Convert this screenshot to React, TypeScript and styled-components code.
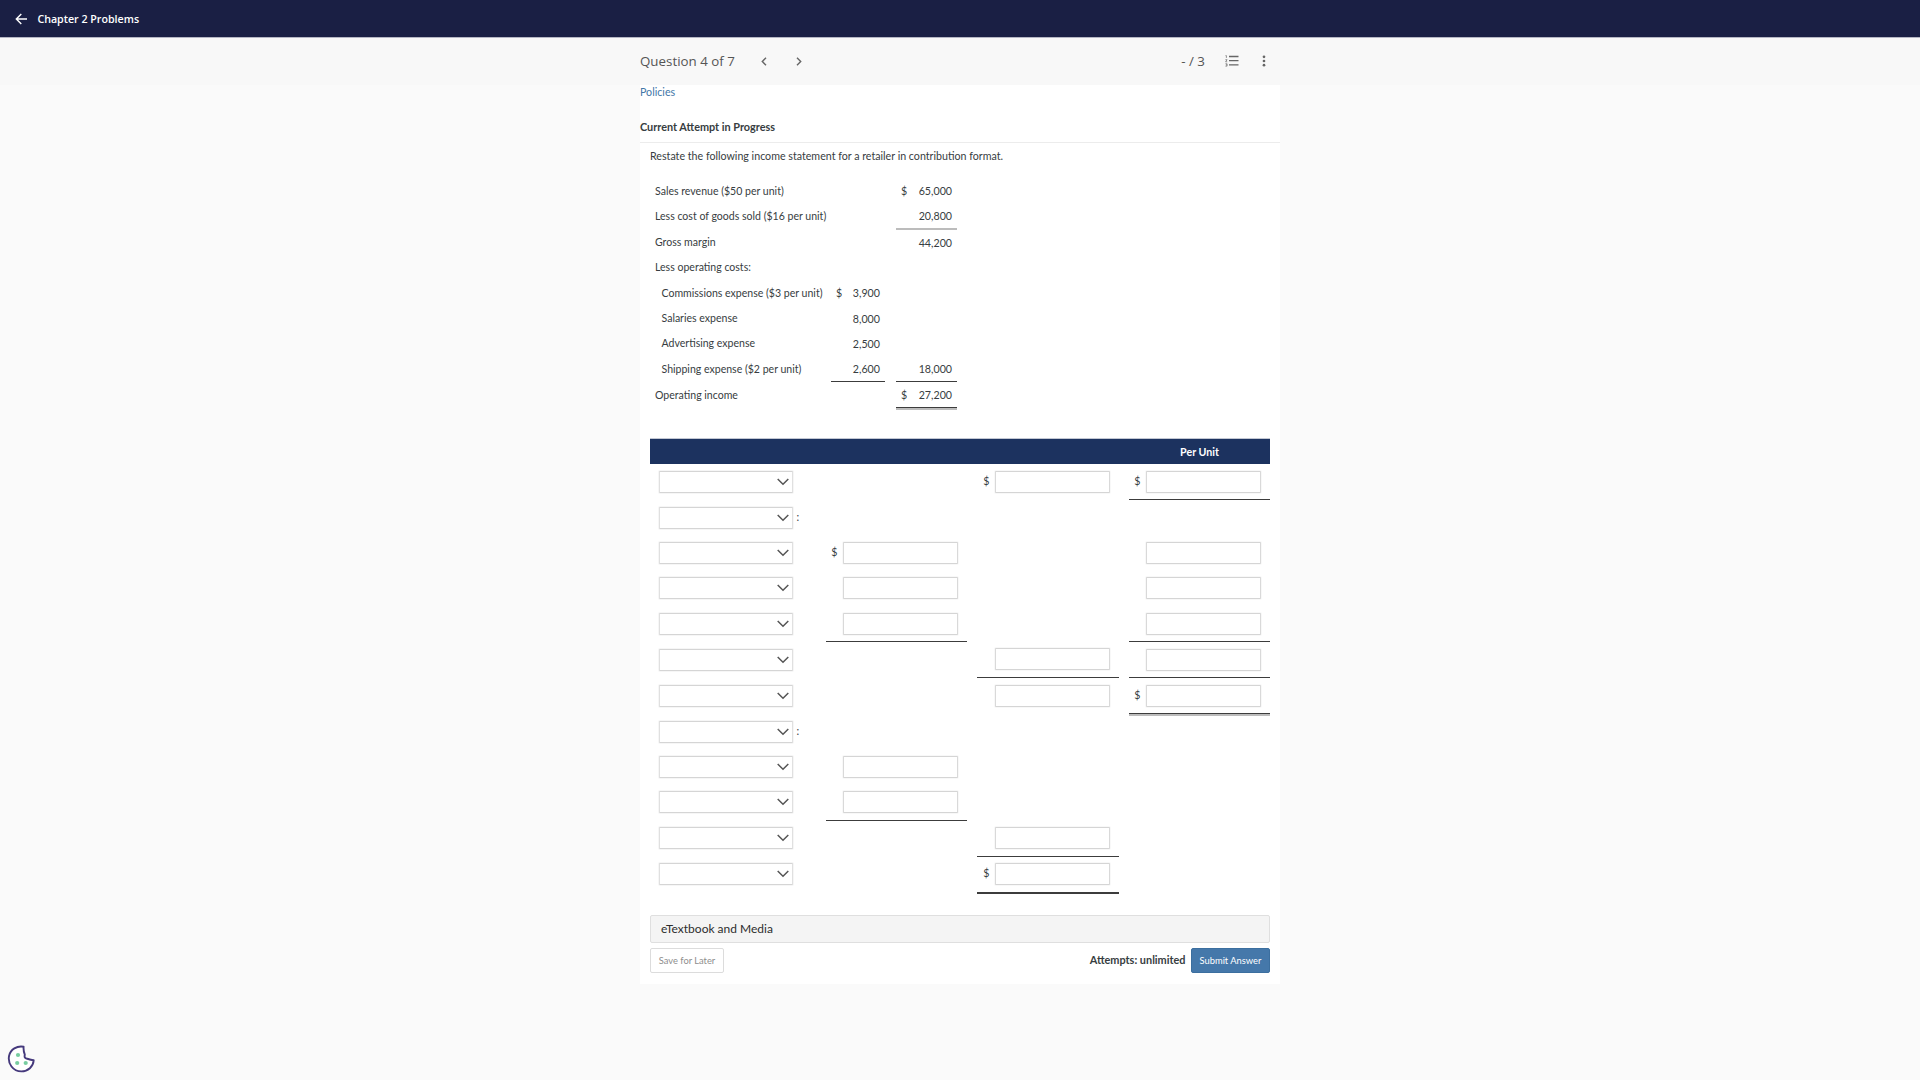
import React from "react";
import styled, { createGlobalStyle } from "styled-components";

const GlobalStyle = createGlobalStyle`
  *, *::before, *::after { box-sizing: border-box; }
  body { margin: 0; background: #fafafa; color: #373d41; font: 10.667px/16px Lato, sans-serif; }
`;

const Page = styled.div`
  min-height: 1080px;
  display: flex;
  flex-direction: column;
`;

const TopBar = styled.header`
  height: 38px;
  display: flex;
  align-items: center;
  gap: 10.4px;
  padding-left: 15px;
  background: #1a1f44;
  border-bottom: 1px solid #b5b6c4;
  color: #fff;
`;

const TopTitle = styled.h1`
  margin: 0;
  font: 600 10.667px/16px "Open Sans", sans-serif;
`;

const SubBar = styled.nav`
  height: 47px;
  padding: 0 0 1px;
  display: flex;
  justify-content: center;
  background: #f8f8f8;
  color: #555;
  font: 13.333px/20px "Open Sans", sans-serif;
`;

const SubInner = styled.div`
  width: 640px;
  display: flex;
  align-items: center;
`;

const QuestionLabel = styled.span`
  width: 116px;
`;

const IconButton = styled.button<{ $width: number }>`
  width: ${(p) => p.$width}px;
  height: 24px;
  padding: 0;
  border: 0;
  background: none;
  color: #666;
  display: flex;
  align-items: center;
  justify-content: center;
`;

const Score = styled.span`
  margin-left: auto;
  margin-right: 10px;
`;

const Panel = styled.main`
  width: 640px;
  height: 899px;
  margin: 0 auto;
  background: #fff;
`;

const PolicyLink = styled.a`
  display: block;
  height: 31px;
  line-height: 14px;
  color: #4277a8;
  text-decoration: none;
`;

const AttemptHeading = styled.h2`
  margin: 0;
  height: 27px;
  padding-top: 3px;
  border-bottom: 1px solid #ececec;
  font-size: 10.87px;
  line-height: 16px;
`;

const Body = styled.section`
  padding: 5px 10px 0;
`;

const Prompt = styled.p`
  margin: 0 0 14px;
`;

const Statement = styled.div`
  width: 307px;
  height: 260px;
  font-size: 10.55px;
`;

const StatementRow = styled.div<{ $height: number; $leading: number }>`
  height: ${(p) => p.$height}px;
  display: grid;
  grid-template-columns: 181px 54px 11px 61px;
  grid-template-rows: 100%;
  line-height: ${(p) => p.$leading}px;
`;

const StatementLabel = styled.span<{ $indent?: boolean }>`
  padding-left: ${(p) => (p.$indent ? 11.5 : 5)}px;
  white-space: nowrap;
`;

type Rule = "none" | "line" | "soft" | "double";

const ruleStyle = (rule?: Rule) => {
  if (rule === "line") return "border-bottom: 1px solid #3c3c3c;";
  if (rule === "soft") return "border-bottom: 2px solid #bcbcbc;";
  if (rule === "double")
    return "border-bottom: 1px solid #3c3c3c; box-shadow: 0 2px 0 #bcbcbc;";
  return "";
};

const Amount = styled.span<{ $rule?: Rule; $column: number }>`
  grid-column: ${(p) => p.$column};
  display: flex;
  justify-content: space-between;
  padding: 0 5px;
  height: ${(p) => (p.$rule === "double" ? "26px" : "100%")};
  font-size: 10.667px;
  ${(p) => ruleStyle(p.$rule)}
`;

const FormHeader = styled.div`
  height: 26px;
  border-top: 1px solid #c2c7d3;
  background: #1c325f;
  color: #fff;
  display: flex;
  justify-content: flex-end;
  font-weight: 700;
  line-height: 25px;
`;

const PerUnit = styled.span`
  width: 141px;
  text-align: center;
`;

const FormRow = styled.div<{ $height: number }>`
  height: ${(p) => p.$height}px;
  display: grid;
  grid-template-columns: 176px 141px 10px 142px 10px 141px;
`;

const LabelCell = styled.div<{ $top: number }>`
  padding: ${(p) => p.$top}px 0 0 9px;
  display: flex;
  align-items: flex-start;
  gap: 3.5px;
  line-height: 20px;
`;

const SelectBox = styled.button`
  width: 134px;
  height: 22px;
  padding: 0 3.5px 1px 0;
  background: #fff;
  border: 1px solid;
  border-color: #d5d5d5 #e0e0e0 #d5d5d5;
  border-radius: 1px;
  box-shadow: 0 0 0 1px #f6f6f6;
  display: flex;
  align-items: center;
  justify-content: flex-end;
  color: #555;
`;

const EntryCell = styled.div<{ $top: number; $column: number; $rule?: Rule }>`
  grid-column: ${(p) => p.$column};
  height: ${(p) => (p.$rule === "double" ? "36px" : "100%")};
  padding: ${(p) => p.$top}px 9px 0 0;
  display: flex;
  justify-content: flex-end;
  align-items: flex-start;
  gap: 5.5px;
  line-height: 20px;
  ${(p) => ruleStyle(p.$rule)}
`;

const Entry = styled.input`
  width: 115px;
  height: 22px;
  padding: 0 4px;
  border: 1px solid;
  border-color: #d5d5d5 #d9d9d9 #d5d5d5;
  border-radius: 1px;
  box-shadow: 0 0 0 1px #f8f8f8;
  background: #fff;
  font: inherit;
`;

const Media = styled.button`
  width: 100%;
  height: 28px;
  margin-top: 21px;
  padding: 0 0 1px 10px;
  display: block;
  border: 1px solid #dfdfdf;
  border-radius: 2px;
  background: #f4f4f4;
  color: #2d2d2d;
  text-align: left;
  font: 12px/24px Lato, sans-serif;
`;

const Footer = styled.footer`
  display: flex;
  align-items: center;
  margin-top: 5px;
`;

const Action = styled.button<{ $primary?: boolean }>`
  width: ${(p) => (p.$primary ? 79 : 74)}px;
  height: 25px;
  padding: 0;
  border: 1px solid ${(p) => (p.$primary ? "#3c6f9f" : "#dcdcdc")};
  border-radius: 2px;
  background: ${(p) => (p.$primary ? "#4578aa" : "#fff")};
  color: ${(p) => (p.$primary ? "#fff" : "#8e8e8e")};
  font: 9.333px/16px Lato, sans-serif;
`;

const Attempts = styled.strong`
  margin: 0 5.5px 2px auto;
  font-size: 10.9px;
`;

const CookieButton = styled.button`
  position: fixed;
  left: 7px;
  bottom: 7px;
  width: 28px;
  height: 28px;
  padding: 0;
  border: 0;
  background: none;
`;

const BackIcon = () => (
  <svg width="12" height="12" viewBox="0 0 12 12" fill="none" stroke="currentColor" strokeWidth="1.4">
    <path d="M12 6H1.5M6.3 1 1.3 6l5 5" />
  </svg>
);

const Chevron = ({ flip = false }: { flip?: boolean }) => (
  <svg width="6" height="9" viewBox="0 0 6 9" fill="none" stroke="currentColor" strokeWidth="1.4">
    <path d={flip ? "M1 .8 4.7 4.5 1 8.2" : "M5 .8 1.3 4.5 5 8.2"} />
  </svg>
);

const ListIcon = () => (
  <svg width="14" height="12" viewBox="0 0 14 12" fill="none" stroke="currentColor">
    <path strokeWidth="1.3" d="M4 1.5h9.5M4 5.7h9.5M4 9.9h9.5" />
    <path strokeWidth=".7" d="M.5.6h.9v2.3M.4 4.7h1.7L.6 6.8h1.6M.4 8.8h1.7v2.3H.4M1 9.9h1" />
  </svg>
);

const DotsIcon = () => (
  <svg width="4" height="12" viewBox="0 0 4 12" fill="currentColor">
    <circle cx="2" cy="1.8" r="1.35" />
    <circle cx="2" cy="6" r="1.35" />
    <circle cx="2" cy="10.2" r="1.35" />
  </svg>
);

const SelectArrow = () => (
  <svg width="12" height="8" viewBox="0 0 12 8" fill="none" stroke="currentColor" strokeWidth="1.5">
    <path d="M.7 1 6 6.3 11.3 1" />
  </svg>
);

const CookieIcon = () => (
  <svg width="28" height="28" viewBox="0 0 28 28">
    <path
      d="M16.6 1.7C10 .4 3.400 4.500 2.100 10.800.5 18.500 6 26.400 14.400 26.400c6.600 0 11.900-4.800 12.300-11.100-2.100-.1-3.900-.9-6.600-1.500-2.300-.4-2.900-1.500-2.300-4.100-1-2.600-1.500-4.600-1.200-8Z"
      fill="#fff"
      stroke="#45397c"
      strokeWidth="1.9"
      strokeLinejoin="round"
    />
    <g fill="#78cda0">
      <circle cx="11" cy="10" r="2.1" />
      <circle cx="10.2" cy="18" r="2.1" />
      <circle cx="18.7" cy="18" r="2.1" />
    </g>
  </svg>
);

type Figure = { value: string; dollar?: boolean; rule?: Rule };
type Line = {
  label: string;
  height: number;
  leading: number;
  indent?: boolean;
  inner?: Figure;
  outer?: Figure;
};

const statement: Line[] = [
  { label: "Sales revenue ($50 per unit)", height: 25, leading: 26, outer: { value: "65,000", dollar: true } },
  { label: "Less cost of goods sold ($16 per unit)", height: 27, leading: 26, outer: { value: "20,800", rule: "soft" } },
  { label: "Gross margin", height: 25, leading: 25, outer: { value: "44,200" } },
  { label: "Less operating costs:", height: 25, leading: 25 },
  {
    label: "Commissions expense ($3 per unit)",
    height: 26,
    leading: 26,
    indent: true,
    inner: { value: "3,900", dollar: true },
  },
  { label: "Salaries expense", height: 25, leading: 25, indent: true, inner: { value: "8,000" } },
  { label: "Advertising expense", height: 25, leading: 25, indent: true, inner: { value: "2,500" } },
  {
    label: "Shipping expense ($2 per unit)",
    height: 26,
    leading: 26,
    indent: true,
    inner: { value: "2,600", rule: "line" },
    outer: { value: "18,000", rule: "line" },
  },
  { label: "Operating income", height: 28, leading: 26, outer: { value: "27,200", dollar: true, rule: "double" } },
];

type Field = { column: 2 | 4 | 6; dollar?: boolean; rule?: Rule; top?: number };
type Entries = { height: number; top: number; colon?: boolean; fields: Field[] };

const rows: Entries[] = [
  { height: 36, top: 7, fields: [{ column: 4, dollar: true }, { column: 6, dollar: true, rule: "line" }] },
  { height: 35, top: 7, colon: true, fields: [] },
  { height: 35, top: 7, fields: [{ column: 2, dollar: true }, { column: 6 }] },
  { height: 36, top: 7, fields: [{ column: 2 }, { column: 6 }] },
  { height: 36, top: 7, fields: [{ column: 2, rule: "line" }, { column: 6, rule: "line" }] },
  { height: 36, top: 7, fields: [{ column: 4, rule: "line", top: 6 }, { column: 6, rule: "line" }] },
  { height: 36, top: 7, fields: [{ column: 4 }, { column: 6, dollar: true, rule: "double" }] },
  { height: 35, top: 7, colon: true, fields: [] },
  { height: 35, top: 7, fields: [{ column: 2 }] },
  { height: 37, top: 7, fields: [{ column: 2, rule: "line" }] },
  { height: 36, top: 6, fields: [{ column: 4, rule: "line" }] },
  { height: 36, top: 6, fields: [{ column: 4, dollar: true, rule: "line" }] },
];

const DoubleRuleEnd = styled.div`
  width: 142px;
  height: 1px;
  margin-left: 327px;
  background: #3c3c3c;
`;

const Money = ({ figure, column }: { figure?: Figure; column: number }) =>
  figure ? (
    <Amount $column={column} $rule={figure.rule}>
      <span>{figure.dollar ? "$" : ""}</span>
      <span>{figure.value}</span>
    </Amount>
  ) : null;

export default function App() {
  return (
    <Page>
      <GlobalStyle />
      <TopBar>
        <BackIcon />
        <TopTitle>Chapter 2 Problems</TopTitle>
      </TopBar>
      <SubBar>
        <SubInner>
          <QuestionLabel>Question 4 of 7</QuestionLabel>
          <IconButton $width={16} aria-label="Previous question"><Chevron /></IconButton>
          <IconButton $width={53} aria-label="Next question"><Chevron flip /></IconButton>
          <Score>- / 3</Score>
          <IconButton $width={33} aria-label="Question list"><ListIcon /></IconButton>
          <IconButton $width={32} aria-label="More options"><DotsIcon /></IconButton>
        </SubInner>
      </SubBar>
      <Panel>
        <PolicyLink>Policies</PolicyLink>
        <AttemptHeading>Current Attempt in Progress</AttemptHeading>
        <Body>
          <Prompt>Restate the following income statement for a retailer in contribution format.</Prompt>
          <Statement>
            {statement.map((line) => (
              <StatementRow key={line.label} $height={line.height} $leading={line.leading}>
                <StatementLabel $indent={line.indent}>{line.label}</StatementLabel>
                <Money figure={line.inner} column={2} />
                <Money figure={line.outer} column={4} />
              </StatementRow>
            ))}
          </Statement>
          <FormHeader>
            <PerUnit>Per Unit</PerUnit>
          </FormHeader>
          {rows.map((row, i) => (
            <FormRow key={i} $height={row.height}>
              <LabelCell $top={row.top}>
                <SelectBox aria-label={`Line ${i + 1}`}><SelectArrow /></SelectBox>
                {row.colon && <span>:</span>}
              </LabelCell>
              {row.fields.map((f) => (
                <EntryCell key={f.column} $column={f.column} $rule={f.rule} $top={f.top ?? row.top}>
                  {f.dollar && <span>$</span>}
                  <Entry />
                </EntryCell>
              ))}
            </FormRow>
          ))}
          <DoubleRuleEnd />
          <Media>eTextbook and Media</Media>
          <Footer>
            <Action>Save for Later</Action>
            <Attempts>Attempts: unlimited</Attempts>
            <Action $primary>Submit Answer</Action>
          </Footer>
        </Body>
      </Panel>
      <CookieButton aria-label="Cookie settings"><CookieIcon /></CookieButton>
    </Page>
  );
}
